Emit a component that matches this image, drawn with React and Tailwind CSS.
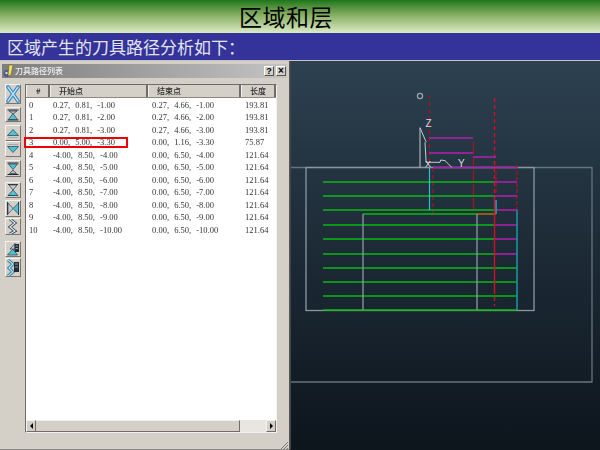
const CJK = { fontFamily: '"Noto Sans CJK SC", sans-serif' };

const rows = [
  ["0", "0.27, 0.81, -1.00", "0.27, 4.66, -1.00", "193.81"],
  ["1", "0.27, 0.81, -2.00", "0.27, 4.66, -2.00", "193.81"],
  ["2", "0.27, 0.81, -3.00", "0.27, 4.66, -3.00", "193.81"],
  ["3", "0.00, 5.00, -3.30", "0.00, 1.16, -3.30", "75.87"],
  ["4", "-4.00, 8.50, -4.00", "0.00, 6.50, -4.00", "121.64"],
  ["5", "-4.00, 8.50, -5.00", "0.00, 6.50, -5.00", "121.64"],
  ["6", "-4.00, 8.50, -6.00", "0.00, 6.50, -6.00", "121.64"],
  ["7", "-4.00, 8.50, -7.00", "0.00, 6.50, -7.00", "121.64"],
  ["8", "-4.00, 8.50, -8.00", "0.00, 6.50, -8.00", "121.64"],
  ["9", "-4.00, 8.50, -9.00", "0.00, 6.50, -9.00", "121.64"],
  ["10", "-4.00, 8.50, -10.00", "0.00, 6.50, -10.00", "121.64"],
];

const C = "#4cc4d8";
const Tri = ({ d, fill = C }) => <path d={d} fill={fill} stroke="#2a3a4a" strokeWidth="0.7" strokeLinejoin="round" />;

function ToolBtn({ h, children }) {
  return (
    <div
      className="w-[16px] bg-[#d4d0c8] border border-t-[#f4f2ee] border-l-[#f4f2ee] border-r-[#77756f] border-b-[#77756f] flex items-center justify-center shrink-0"
      style={{ height: h }}
    >
      <svg width="14" height={h - 2} viewBox={`0 0 14 ${h - 2}`}>
        {children}
      </svg>
    </div>
  );
}

function Toolbar() {
  return (
    <div className="w-[23px] shrink-0 pt-[6px] pl-[3px] flex flex-col">
      <ToolBtn h={20}>
        <path d="M2 2 L12 16 M12 2 L2 16" stroke="#3a80c0" strokeWidth="3.6" strokeLinecap="round" />
        <path d="M2 2 L12 16 M12 2 L2 16" stroke="#b4e4f4" strokeWidth="1.4" strokeLinecap="round" />
      </ToolBtn>
      <div className="h-[3px] shrink-0" />
      <ToolBtn h={15}>
        <path d="M1.5 2 H12.5 M1.5 12 H12.5" stroke="#1c2a3a" strokeWidth="1.2" />
        <Tri d="M3 3 H11 L7 6 Z" fill="#b8bcc0" />
        <Tri d="M7 5.5 L11.5 11.5 H2.5 Z" />
      </ToolBtn>
      <div className="h-[3px] shrink-0" />
      <ToolBtn h={16}>
        <Tri d="M7 3.5 L12.5 9.5 H1.5 Z" />
        <path d="M2 11.5 H12" stroke="#a8a8a4" strokeWidth="1" />
      </ToolBtn>
      <ToolBtn h={16}>
        <path d="M2 2.5 H12" stroke="#a8a8a4" strokeWidth="1" />
        <Tri d="M1.5 4.5 H12.5 L7 10.5 Z" />
      </ToolBtn>
      <div className="h-[3px] shrink-0" />
      <ToolBtn h={17}>
        <path d="M1.5 2 H12.5 M1.5 13.5 H12.5" stroke="#1c2a3a" strokeWidth="1.2" />
        <Tri d="M2.5 3 H11.5 L7 8.5 Z" />
        <Tri d="M7 9 L10.5 12.5 H3.5 Z" fill="#b8bcc0" />
      </ToolBtn>
      <div className="h-[5px] shrink-0" />
      <ToolBtn h={16}>
        <path d="M2 1.5 H12 M2 12.5 H12" stroke="#1c2a3a" strokeWidth="0.9" />
        <Tri d="M3 2 H11 L7 7 Z" fill="#c8ccd0" />
        <Tri d="M7 7 L12 12.5 H2 Z" />
      </ToolBtn>
      <div className="h-[2px] shrink-0" />
      <ToolBtn h={17}>
        <path d="M1.5 1 V14 M12.5 1 V14" stroke="#1c2a3a" strokeWidth="0.9" />
        <Tri d="M2 2 L7 7.5 L2 13 Z" fill="#c8ccd0" />
        <Tri d="M12.5 2 L7 7.5 L12.5 13 Z" />
      </ToolBtn>
      <div className="h-[1px] shrink-0" />
      <ToolBtn h={17}>
        <path d="M4 0 L9 4 L4 8 L9 12 L4 15" fill="none" stroke="#2a3a4a" strokeWidth="2.8" />
        <path d="M4 0 L9 4 L4 8 L9 12 L4 15" fill="none" stroke="#e4f0f4" strokeWidth="1.2" />
      </ToolBtn>
      <div className="h-[6px] shrink-0" />
      <ToolBtn h={16}>
        <Tri d="M9 1.5 V7 L4 7 Z" fill="#c8ccd0" />
        <Tri d="M7 7 L11.5 13 H1.5 Z" />
        <rect x="8.5" y="2" width="4.5" height="8" fill="#1c2a3a" />
        <path d="M9.5 4 H12 M9.5 6.5 H12" stroke="#d4d0c8" strokeWidth="0.7" />
      </ToolBtn>
      <div className="h-[1px] shrink-0" />
      <ToolBtn h={19}>
        <path d="M2 1 L7 5 L3 9 L7 13 L2 17" fill="none" stroke="#2a7a9a" strokeWidth="3" />
        <path d="M2 1 L7 5 L3 9 L7 13 L2 17" fill="none" stroke="#b4e4f4" strokeWidth="1.2" />
        <rect x="8" y="3" width="5" height="10" fill="#1c2a3a" />
        <path d="M9 5 H12 M9 8 H12" stroke="#d4d0c8" strokeWidth="0.7" />
      </ToolBtn>
    </div>
  );
}

function HeadCell({ w, label, pl }) {
  return (
    <div
      className="h-full shrink-0 border-r-2 border-r-[#6f6d68] border-l border-l-[#f4f2ee] flex items-center text-[8px] font-medium text-[#2c2c2c] blur-[0.3px]"
      style={{ width: w, paddingLeft: pl, ...CJK }}
    >
      {label}
    </div>
  );
}

function ListTable() {
  return (
    <div className="relative w-[252px] h-[349px] flex flex-col bg-white border-t border-l border-t-[#6f6d68] border-l-[#6f6d68] border-b border-r border-b-[#f4f2ee] border-r-[#f4f2ee]">
      <div className="h-[13px] flex bg-[#d4d0c8] border-b border-b-[#8a8882] shrink-0">
        <HeadCell w={24} label="#" pl={9} />
        <HeadCell w={98} label="开始点" pl={8} />
        <HeadCell w={93} label="结束点" pl={8} />
        <HeadCell w={35} label="长度" pl={8} />
      </div>
      <div className="flex-1 pt-[0.5px] flex flex-col">
        {rows.map((r) => (
          <div
            key={r[0]}
            className="h-[12.5px] flex items-center text-[8.5px] leading-none [word-spacing:3px] text-[#333] shrink-0 blur-[0.2px] whitespace-pre"
            style={{ fontFamily: '"Liberation Serif", serif' }}
          >
            <span className="w-[27px] pl-[3px] shrink-0">{r[0]}</span>
            <span className="w-[99px] shrink-0">{r[1]}</span>
            <span className="w-[93px] shrink-0">{r[2]}</span>
            <span>{r[3]}</span>
          </div>
        ))}
      </div>
      <div className="h-[12px] shrink-0 flex bg-[#e8e6e1]">
        <div className="w-[10px] bg-[#d4d0c8] border-r border-b border-r-[#6f6d68] border-b-[#6f6d68] border-t border-l border-t-[#f4f2ee] border-l-[#f4f2ee] flex items-center justify-center">
          <span className="w-0 h-0 border-y-[3px] border-y-transparent border-r-[3px] border-r-black" />
        </div>
        <div className="w-[204px] bg-[#d4d0c8] border-r border-b border-r-[#6f6d68] border-b-[#6f6d68] border-t border-t-[#f4f2ee]" />
        <div className="flex-1" />
        <div className="w-[10px] bg-[#d4d0c8] border-r border-b border-r-[#6f6d68] border-b-[#6f6d68] border-t border-l border-t-[#f4f2ee] border-l-[#f4f2ee] flex items-center justify-center">
          <span className="w-0 h-0 border-y-[3px] border-y-transparent border-l-[3px] border-l-black" />
        </div>
      </div>
      <div className="absolute left-[-2px] top-[52px] w-[104px] h-[11px] border-2 border-[#f00000]" />
    </div>
  );
}

function Dialog() {
  return (
    <div className="relative w-[290px] shrink-0 bg-[#d4d0c8] border-r border-r-[#555] pt-[3px] px-[2px] flex flex-col">
      <div className="h-[14px] flex items-center bg-gradient-to-r from-[#7e7e7e] to-[#c4c4c4] pl-[1px] pr-[1px] shrink-0">
        <svg width="11" height="14" viewBox="0 0 11 14" className="shrink-0">
          <circle cx="4" cy="9.5" r="3.4" fill="#4a5a88" />
          <circle cx="3.5" cy="9" r="1.2" fill="#d8dce8" />
          <path d="M6 1 L10 1 L8 11 L5 12 Z" fill="#f4e04a" stroke="#555" strokeWidth="0.5" />
        </svg>
        <span className="ml-[1px] text-[8px] font-medium text-[#f0f0f0] blur-[0.3px]" style={CJK}>刀具路径列表</span>
        <div className="ml-auto flex gap-[2px]">
          <div className="w-[10px] h-[10px] bg-[#d4d0c8] border border-t-white border-l-white border-r-[#555] border-b-[#555] flex items-center justify-center text-[9px] font-bold leading-none text-black" style={{ fontFamily: '"Liberation Sans", sans-serif' }}>?</div>
          <div className="w-[10px] h-[10px] bg-[#d4d0c8] border border-t-white border-l-white border-r-[#555] border-b-[#555] flex items-center justify-center text-[10px] font-bold leading-none text-black" style={{ fontFamily: '"Liberation Sans", sans-serif' }}>×</div>
        </div>
      </div>
      <div className="flex flex-1">
        <Toolbar />
        <div className="flex-1 pt-[6px]">
          <ListTable />
        </div>
      </div>
      <svg className="absolute right-[1px] bottom-[1px]" width="8" height="8" viewBox="0 0 8 8">
        <path d="M1 8 L8 1 M4 8 L8 4 M7 8 L8 7" stroke="#77756f" strokeWidth="1" />
      </svg>
      <div className="absolute left-0 right-0 bottom-0 h-px bg-[#8a8882]" />
    </div>
  );
}

function CadView() {
  const G = "#0ab812";
  const M = "#b020b0";
  const W = "#8b98a0";
  const R = "#d01020";
  const D = "#98182a";
  const T = "#1a929e";
  const h = [182, 196, 210, 225, 239, 254];
  const full = [268, 282, 296, 310];
  return (
    <div className="flex-1 bg-gradient-to-b from-[#2d4150] to-[#0d151d] border-l border-l-[#444]">
      <svg width="309" height="389" viewBox="291 61 309 389" className="block">
        <path d="M291 167.5 H592 V382 H291" fill="none" stroke="#66747c" strokeWidth="1.3" />
        <rect x="306" y="167.5" width="228" height="143" fill="none" stroke={W} strokeWidth="1.3" />
        <path d="M429.5 95 V167" stroke={D} strokeWidth="1.4" strokeDasharray="4 3" />
        <path d="M433 168 V215" stroke={D} strokeWidth="1.4" strokeDasharray="4 3" />
        <path d="M473.5 142 V210" stroke={D} strokeWidth="1.4" strokeDasharray="12 2" />
        <path d="M494.5 98 V200" stroke={R} strokeWidth="1.4" strokeDasharray="4 3" />
        <path d="M496 165 V195" stroke={D} strokeWidth="1.4" strokeDasharray="4 2" />
        <path d="M517 165 V210" stroke={D} strokeWidth="1.4" strokeDasharray="4 2" />

        <path d="M429 138 H473 M429 153 H473 M473 157 H496 M433 167.5 H517" stroke={M} strokeWidth="1.5" />
        {h.map((y) => (
          <g key={y}>
            <path d={`M323 ${y} H494`} stroke={G} strokeWidth="1.5" />
            <path d={`M494 ${y} H517`} stroke={M} strokeWidth="1.5" />
          </g>
        ))}
        {full.map((y) => (
          <path key={y} d={`M323 ${y} H517`} stroke={G} strokeWidth="1.5" />
        ))}
        <path d="M363 214 H477" stroke={G} strokeWidth="1.5" />
        <path d="M477 214 H496" stroke="#b86a10" strokeWidth="1.5" />
        <path d="M363 214 V310 M477 214 V310" stroke={W} strokeWidth="1.3" />
        <path d="M429.5 167.5 V210" stroke="#30c0c8" strokeWidth="1.2" />
        <path d="M496 200 V214" stroke={T} strokeWidth="2" />
        <path d="M517 210 V310" stroke={T} strokeWidth="1.6" />
        <path d="M494.5 200 V290" stroke={R} strokeWidth="1.4" />
        <path d="M494.5 290 V306" stroke={R} strokeWidth="1.4" strokeDasharray="4 3" />

        <path d="M420 167.3 V127.7 L426 141.7 L425 142.7 L426 160 V162.3 H440 L440.7 160 L445 160.7 L451.7 167.3" fill="none" stroke="#c4ccd0" strokeWidth="1" />
        <circle cx="420" cy="96" r="2.6" fill="none" stroke="#9aa6ae" strokeWidth="1.2" />
        <text x="425.5" y="127" fontSize="10" fill="#d8dde0" fontFamily="Liberation Sans">Z</text>
        <text x="425" y="167" fontSize="9" fill="#d8dde0" fontFamily="Liberation Sans">X</text>
        <text x="458" y="167" fontSize="10" fill="#d8dde0" fontFamily="Liberation Sans">Y</text>
      </svg>
    </div>
  );
}

export default function App() {
  return (
    <div className="w-[600px] h-[450px] overflow-hidden flex flex-col bg-[#2d4150]" style={CJK}>
      <div className="h-[33px] shrink-0 bg-gradient-to-b from-[#1a761a] via-[#8fb46a] to-[#dcebc6] flex items-center justify-center">
        <span className="text-[23px] leading-none tracking-[0.5px] text-black ml-[-28px]">区域和层</span>
      </div>
      <div className="h-[27px] shrink-0 bg-[#333399] flex items-center pl-[7px]">
        <span className="text-[17px] leading-none text-[#e4e4ee]">区域产生的刀具路径分析如下：</span>
      </div>
      <div className="h-[1px] shrink-0 bg-[#c8c0c8]" />
      <div className="flex flex-1 min-h-0">
        <Dialog />
        <CadView />
      </div>
    </div>
  );
}
